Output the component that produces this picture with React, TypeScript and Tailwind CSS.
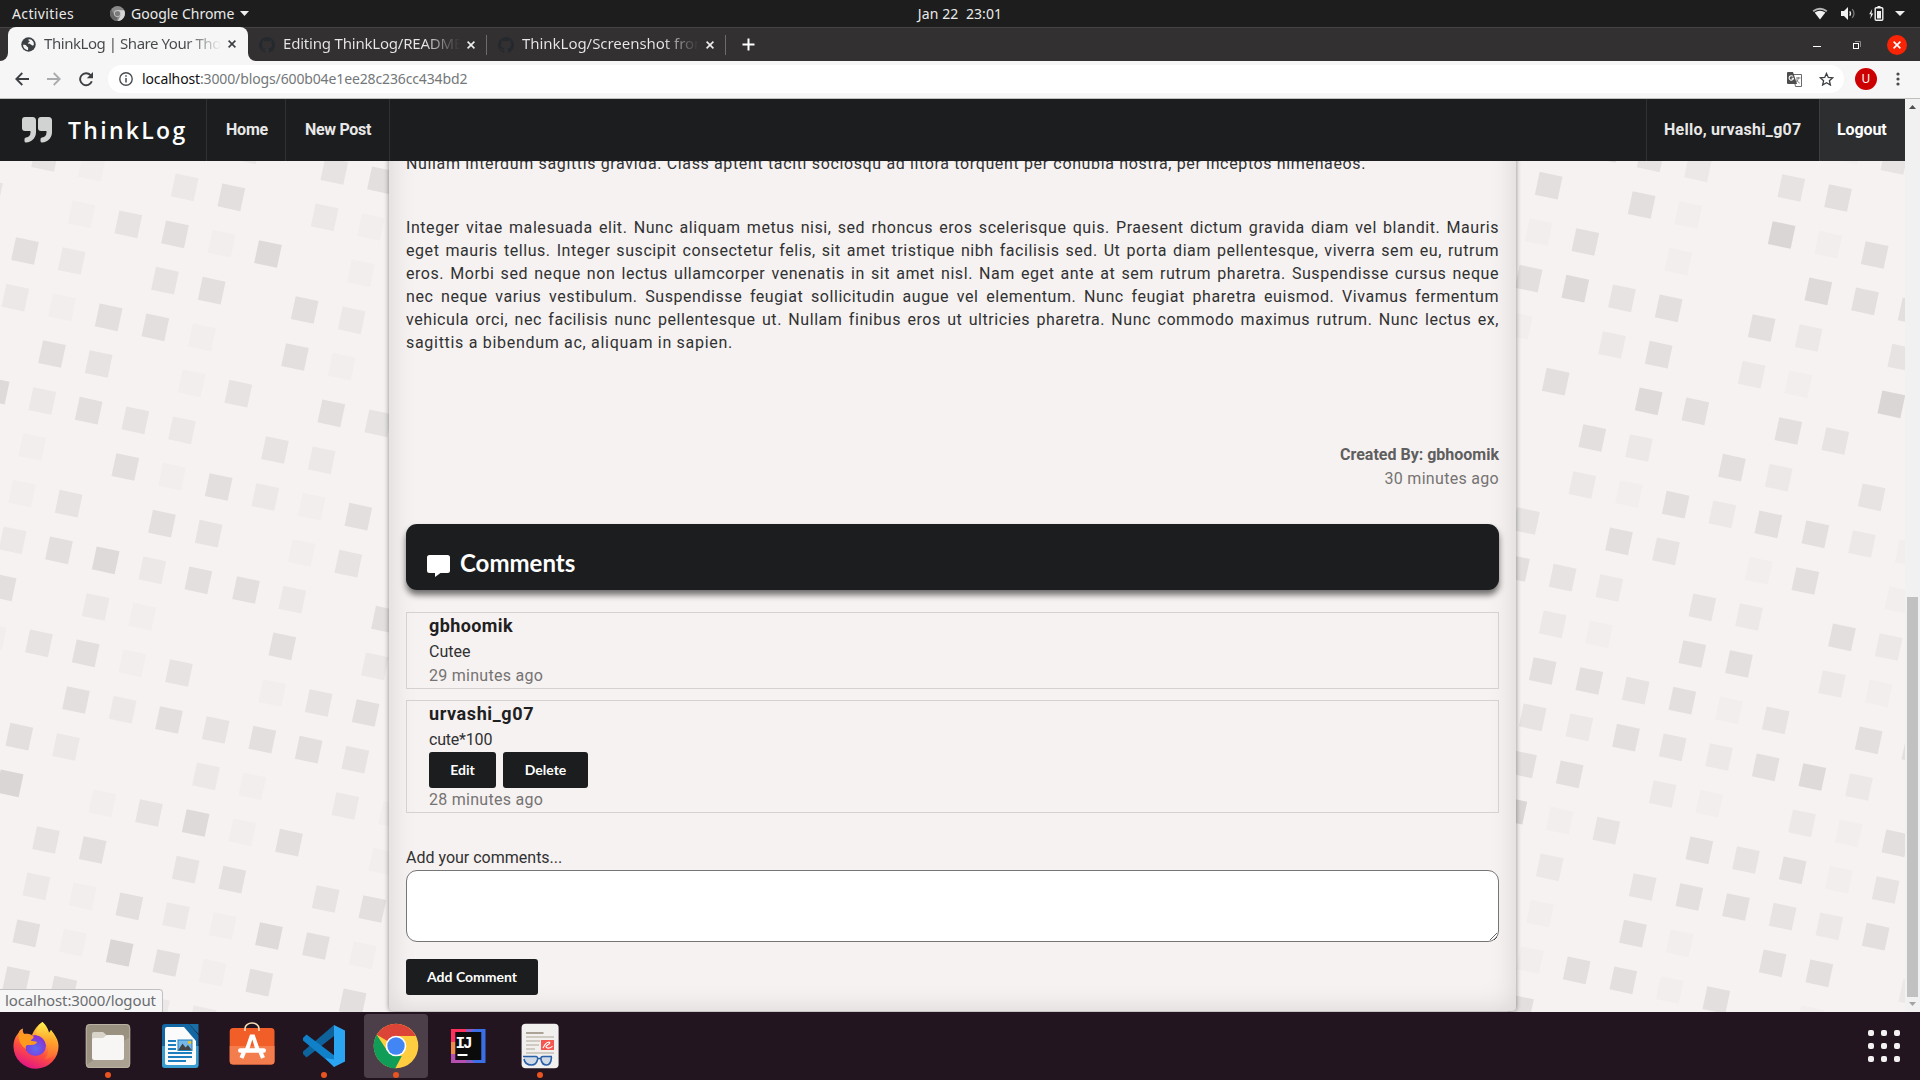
import type { ReactNode } from "react";

/* Tile centres (x, y, shade) of the confetti wallpaper, in thirds of a pixel. */
const LEFT_TOP: number[][] = [
  [135,-6,3],[275,23,1],[740,-29,2],[554,82,2],[694,112,4],[1003,33,3],[1143,61,4],[-33,97,3],[245,163,1],[385,193,3],[525,223,4],[665,251,1],[804,282,5],[974,172,2],[1113,201,1],[1083,340,1],[75,273,4],[215,303,2],[495,362,3],[635,392,4],[46,413,2],[186,442,1],[326,472,4],[466,502,4],[606,532,1],[914,450,4],[1055,481,2],[156,582,4],[296,612,3],[575,670,1],[715,701,3],[885,591,4],[1025,620,1],[-13,692,5],[127,723,2],[266,752,4],[406,781,3],[546,811,2],[994,760,4],[1135,790,3],[97,861,1],[825,870,3],[965,901,2],[376,921,4],[516,950,1],[656,981,4],[796,1011,2],[935,1040,1],[1075,1070,4],[66,1001,1],[206,1031,3],[486,1091,4],[626,1121,3],[38,1141,2],[177,1171,4],[317,1201,5],[457,1231,2],[905,1179,1],[1045,1211,3],[595,1261,4],[738,1290,4],[8,1282,4],[877,1319,2],
];
const LEFT_BOTTOM: number[][] = [
  [287,81,2],[427,110,1],[847,199,4],[1155,119,4],[1125,259,2],[-22,170,1],[117,190,3],[257,220,4],[397,250,1],[537,279,3],[817,339,1],[956,369,3],[1097,399,4],[228,360,4],[368,389,2],[507,420,4],[647,450,3],[787,479,4],[926,509,4],[1066,539,3],[58,470,4],[198,501,2],[618,589,2],[757,619,1],[1036,678,2],[1177,705,1],[29,610,6],[307,670,1],[447,699,3],[587,729,5],[727,757,1],[867,788,4],[1147,845,1],[138,780,3],[278,810,4],[557,869,3],[697,899,4],[977,957,3],[1117,987,4],[109,919,2],[248,949,1],[388,979,4],[528,1008,2],[668,1038,1],[807,1068,5],[948,1098,4],[1088,1126,1],[79,1060,4],[219,1088,1],[359,1119,6],[499,1149,4],[638,1178,1],[778,1208,4],[49,1200,4],[190,1229,4],[1058,1267,4],[468,1289,2],[608,1318,2],
];
const RIGHT_TOP: number[][] = [
  [146,77,4],[425,135,4],[565,165,1],[452,-5,3],[594,25,2],[320,-33,4],[116,216,1],[256,246,4],[535,305,1],[874,84,3],[1014,114,4],[845,225,6],[985,254,1],[1124,285,4],[1183,3,3],[1045,-28,1],[86,356,4],[226,386,5],[366,415,3],[506,445,4],[56,497,1],[336,555,2],[476,584,4],[955,394,5],[1095,424,4],[1235,454,4],[785,504,4],[926,534,2],[1204,593,3],[755,644,2],[895,673,1],[167,665,4],[446,724,5],[586,754,4],[1174,733,6],[277,834,4],[417,864,2],[865,813,4],[1006,843,3],[247,975,2],[387,1002,1],[527,1034,4],[667,1063,2],[696,923,4],[836,953,2],[1115,1012,3],[78,1083,3],[357,1144,4],[498,1174,3],[805,1093,4],[946,1123,4],[1086,1152,2],[1226,1180,1],[48,1224,4],[188,1253,3],[328,1284,2],[776,1232,1],[916,1263,4],
];
const RIGHT_BOTTOM: number[][] = [
  [158,133,2],[297,163,1],[607,82,3],[747,111,2],[1026,172,4],[1166,201,2],[1195,60,1],[128,273,4],[268,303,4],[407,332,3],[547,362,4],[687,391,1],[827,421,3],[577,222,4],[717,252,4],[996,312,2],[1136,340,1],[1106,481,4],[1246,511,4],[98,412,3],[238,442,2],[378,473,4],[518,502,3],[657,531,2],[797,562,4],[937,591,5],[1077,621,2],[69,553,4],[209,583,4],[488,642,2],[628,671,1],[906,730,2],[1046,760,1],[1186,790,4],[40,692,6],[179,722,1],[319,752,3],[598,811,4],[738,840,3],[878,871,4],[1017,899,1],[1157,930,3],[149,862,2],[428,921,3],[568,951,4],[708,981,4],[848,1010,3],[988,1039,2],[1127,1070,4],[120,1001,1],[399,1061,4],[539,1090,1],[818,1150,4],[958,1180,4],[1237,1238,2],[90,1140,1],[230,1171,4],[370,1201,4],[509,1230,1],[649,1260,4],[60,1285,4],[931,1318,1],
];
const SHADES = ["", "#f1eeed", "#ebe8e7", "#e6e3e2", "#e3dfde", "#dedad9", "#dad6d5"];

function Tiles({ data, dx, dy }: { data: number[][]; dx: number; dy: number }) {
  return (
    <g transform={`translate(${dx} ${dy}) scale(0.33333)`}>
      {data.map(([x, y, s], i) => (
        <rect key={i} x={-35} y={-35} width={70} height={70} fill={SHADES[s]} transform={`translate(${x} ${y}) rotate(12)`} />
      ))}
    </g>
  );
}

function Wallpaper() {
  return (
    <svg className="absolute inset-0" width="1905" height="851" viewBox="0 0 1905 851">
      <Tiles data={LEFT_TOP} dx={0} dy={-1} />
      <Tiles data={LEFT_BOTTOM} dx={0} dy={419} />
      <Tiles data={RIGHT_TOP} dx={1500} dy={-1} />
      <Tiles data={RIGHT_BOTTOM} dx={1500} dy={419} />
    </svg>
  );
}

function TopBar() {
  return (
    <header className="relative flex h-[27px] items-center bg-[#1d1d1d] pb-px text-[14px] text-[#eaeaea]">
      <span className="ml-3 w-[98px] tracking-[0.37px]">Activities</span>
      <svg width="15" height="15" viewBox="0 0 16 16">
        <circle cx="8" cy="8" r="8" fill="#8a8a8a" />
        <path d="M8 4.4h7.1A8 8 0 0 1 8.3 16l3-6z" fill="#d6d6d6" />
        <path d="M1.2 3.8 5 10l3 2-1 4A8 8 0 0 1 1.2 3.8z" fill="#666" />
        <circle cx="8" cy="8" r="3.7" fill="#c9c9c9" />
        <circle cx="8" cy="8" r="2.8" fill="#7b7b7b" />
      </svg>
      <span className="ml-1.5 w-[104px]">Google Chrome</span>
      <svg className="ml-[5px]" width="9" height="5" viewBox="0 0 9 5"><path d="M0 0h9L4.5 5z" fill="#eee" /></svg>
      <span className="absolute inset-x-0 text-center tracking-[0.1px] whitespace-pre">Jan 22  23:01</span>
      <div className="ml-auto flex items-center pr-[15px]">
        <svg width="16" height="13" viewBox="0 0 16 13">
          <path d="M.6 3.6Q8-2 15.4 3.6L14.300 5Q8 .6 1.700 5z" fill="#b5b5b5" />
          <path d="M2.600 5.600Q8 2 13.400 5.600L8 12.500z" fill="#f2f2f2" />
        </svg>
        <svg className="ml-[13px]" width="15" height="13" viewBox="0 0 15 13">
          <path d="M0 4h3l4-4v13L3 9H0z" fill="#f2f2f2" />
          <path d="M8.700 4.300q1.600 2.200 0 4.400" stroke="#e5e5e5" strokeWidth="1.400" fill="none" />
          <path d="M11.200 2.200q3.600 4.300 0 8.600" stroke="#777" strokeWidth="1.300" fill="none" />
        </svg>
        <svg className="ml-[13px]" width="15" height="15" viewBox="0 0 15 15">
          <path d="M3.200 3 .2 8.200h1.800L1.200 13l3-5.500H2.400z" fill="#f2f2f2" />
          <path d="M8.500 0h3v1.500h-3z" fill="#f2f2f2" />
          <rect x="6.200" y="1.700" width="7.600" height="12.600" rx="1" fill="none" stroke="#f2f2f2" strokeWidth="1.400" />
          <rect x="8" y="5" width="4" height="7.500" fill="#f2f2f2" />
        </svg>
        <svg className="ml-[11px]" width="10" height="5" viewBox="0 0 10 5"><path d="M0 0h10L5 5z" fill="#eee" /></svg>
      </div>
    </header>
  );
}

function Cross({ color, size = 8 }: { color: string; size?: number }) {
  return (
    <svg width={size} height={size} viewBox="0 0 8 8"><path d="m.6.6 6.800 6.800M7.400.6.6 7.400" stroke={color} strokeWidth="1.600" /></svg>
  );
}

function Octocat() {
  return (
    <svg className="shrink-0" width="16" height="16" viewBox="0 0 16 16" fill="#24292e">
      <path d="M8 0a8 8 0 0 0-2.530 15.590c.4.070.55-.17.55-.38v-1.490c-2.010.37-2.530-.49-2.690-.94-.09-.23-.48-.94-.82-1.130-.28-.15-.68-.52-.01-.53.63-.01 1.080.58 1.230.82.72 1.210 1.870.87 2.330.66.07-.52.28-.87.51-1.070-1.780-.2-3.640-.89-3.640-3.950 0-.87.31-1.590.82-2.150-.08-.2-.36-1.020.08-2.120 0 0 .67-.21 2.200.82a7.600 7.600 0 0 1 4 0c1.530-1.040 2.200-.82 2.200-.82.44 1.100.16 1.920.08 2.120.51.56.82 1.270.82 2.150 0 3.070-1.870 3.750-3.650 3.950.29.25.54.73.54 1.480v2.200c0 .21.15.46.55.38A8 8 0 0 0 8 0z" />
    </svg>
  );
}

function DarkTab({ title, track }: { title: string; track: string }) {
  return (
    <div className="flex h-full w-[239px] items-center pl-[11px]">
      <Octocat />
      <span className={`mb-[3px] ml-2 w-[177px] overflow-hidden bg-linear-to-r from-[#e8e8e8] from-80% to-[#333031] bg-clip-text text-[15px] whitespace-nowrap text-transparent ${track}`}>{title}</span>
      <span className="ml-[7px] flex"><Cross color="#eee" /></span>
      <span className="ml-auto h-5 w-px bg-[#6d6b6c]" />
    </div>
  );
}

function TabStrip() {
  return (
    <div className="flex h-[34px] border-t border-[#454344] bg-[#333031]">
      <div className="relative -mt-px ml-2 flex h-[34px] w-[240px] items-center rounded-t-lg bg-[#f6f6f6] pl-[13px]">
        <svg className="absolute bottom-0 -left-2" width="8" height="8" viewBox="0 0 8 8"><path d="M8 0v8H0a8 8 0 0 0 8-8z" fill="#f6f6f6" /></svg>
        <svg className="absolute -right-2 bottom-0" width="8" height="8" viewBox="0 0 8 8"><path d="M0 0v8h8a8 8 0 0 1-8-8z" fill="#f6f6f6" /></svg>
        <svg width="15" height="15" viewBox="0 0 15 15">
          <circle cx="7.500" cy="7.500" r="7.200" fill="#3c4043" />
          <path d="M2 7.800c1.500-.3 3 .2 3.600 1.200.3 1 1.500.8 1.600 1.800.1.800-.3 1.500-.2 2.400A5.800 5.800 0 0 1 2 7.800zM7.700 2.200c-.6.900-.2 1.500.5 1.500.9 0 .6 1-.2 1.300-.9.300-.4 1.300-1.200 1.500.5.900 1.800.2 2.800.8.900.6 1.500 1.500 2.500 1.200.5-.1.700-.6.800-1A5.600 5.600 0 0 0 10.500 2.700 5 5 0 0 0 7.700 2.200z" fill="#f6f6f6" />
        </svg>
        <span className="mb-[2px] ml-2 w-[177px] overflow-hidden bg-linear-to-r from-[#45484b] from-80% to-[#f6f6f6] bg-clip-text text-[15px] tracking-[-0.45px] whitespace-nowrap text-transparent">ThinkLog | Share Your Tho</span>
        <span className="ml-[7px] flex"><Cross color="#3c4043" /></span>
      </div>
      <DarkTab title="Editing ThinkLog/README" track="tracking-[-0.2px]" />
      <DarkTab title="ThinkLog/Screenshot from" track="tracking-[-0.04px]" />
      <span className="ml-[16px] flex items-center">
        <svg width="13" height="13" viewBox="0 0 13 13"><path d="M6.500.5v12M.5 6.500h12" stroke="#fff" strokeWidth="2" /></svg>
      </span>
      <div className="ml-auto flex items-center pr-[13px]">
        <span className="mt-1 h-px w-2 bg-white" />
        <svg className="ml-8" width="8" height="8" viewBox="0 0 8 8">
          <path d="M2 .5h5.500V6" stroke="#8a8889" fill="none" />
          <rect x=".5" y="2.500" width="5" height="5" stroke="#fff" fill="none" />
        </svg>
        <span className="ml-[26px] flex size-5 items-center justify-center rounded-full bg-[#f92405]"><Cross color="#fff" /></span>
      </div>
    </div>
  );
}

function Toolbar() {
  return (
    <div className="flex h-[38px] items-center border-b border-[#bcc1bc] bg-[#f6f6f6] pb-px pr-[20px] pl-[15px]">
      <svg width="14" height="14" viewBox="0 0 14 14"><path d="M14 7H1.500M7.300 1 1.300 7l6 6" stroke="#3c4043" strokeWidth="1.800" fill="none" /></svg>
      <svg className="ml-[18px]" width="14" height="14" viewBox="0 0 14 14"><path d="M0 7h12.500M6.700 1l6 6-6 6" stroke="#a9abac" strokeWidth="1.800" fill="none" /></svg>
      <svg className="ml-[18px]" width="15" height="15" viewBox="0 0 15 15"><path d="M12.800 9.200a6 6 0 1 1-1.200-6" stroke="#3c4043" strokeWidth="1.900" fill="none" /><path d="M14 0v6.200H7.800z" fill="#3c4043" /></svg>
      <div className="ml-[14px] flex h-7 flex-1 items-center rounded-full bg-white pr-[10px] pl-[11px]">
        <svg width="14" height="14" viewBox="0 0 14 14"><circle cx="7" cy="7" r="6.200" stroke="#4a4d50" strokeWidth="1.400" fill="none" /><path d="M7 6v4.500M7 3.300v1.500" stroke="#4a4d50" strokeWidth="1.500" /></svg>
        <span className="mb-px ml-[9px] text-[14px] tracking-[-0.13px] text-[#747779]"><span className="text-[#111]">localhost</span>:3000/blogs/600b04e1ee28c236cc434bd2</span>
        <svg className="ml-auto" width="15" height="15" viewBox="0 0 15 15">
          <path d="M6 2.500h8.500v12H8.500z" fill="#fff" stroke="#6a6a6a" />
          <path d="M9 6h4.500M11.200 5v1c0 2-1.200 3.800-2.500 4.500M9.500 7.500c.5 1.500 1.800 3 3.200 3.600" stroke="#777" fill="none" />
          <path d="M0 1a1 1 0 0 1 1-1h5l4 12H1a1 1 0 0 1-1-1z" fill="#4d4d4d" />
          <path d="M6 4.500A2.200 2.200 0 1 0 6.500 6.200H4.600" stroke="#fff" strokeWidth="1.100" fill="none" />
        </svg>
        <svg className="ml-[17px]" width="15" height="14" viewBox="0 0 15 14"><path d="m7.500 1.400 1.800 4 4.400.4-3.300 2.900 1 4.300-3.900-2.300L3.600 13l1-4.300L1.300 5.800l4.400-.4z" stroke="#3c4043" strokeWidth="1.300" fill="none" /></svg>
      </div>
      <span className="ml-[11px] flex size-[22px] items-center justify-center rounded-full bg-[#cc0000] text-[12px] text-white">U</span>
      <svg className="ml-[19px]" width="4" height="14" viewBox="0 0 4 14" fill="#4a4a4a"><circle cx="2" cy="2" r="1.600" /><circle cx="2" cy="7" r="1.600" /><circle cx="2" cy="12" r="1.600" /></svg>
    </div>
  );
}

function SiteNav() {
  return (
    <nav className="flex h-[62px] items-center bg-[#1b1d1e] font-['Roboto',sans-serif] text-[16px] font-bold text-[#e8e8e8]">
      <div className="flex h-full w-[207px] items-center border-r border-[#2f3132] pl-[22px]">
        <svg width="30" height="26" viewBox="0 0 30 26" fill="#d1d3d3">
          <path d="M3 0h7.500A3.500 3.500 0 0 1 14 3.500V15c0 6-4 10-10 10.500a1.500 1.500 0 0 1-1.500-1.500v-2A1.600 1.600 0 0 1 4 20.500c2.800-.3 4.500-2 4.500-5V14H3a3 3 0 0 1-3-3V3a3 3 0 0 1 3-3z" />
          <path d="M19 0h7.500A3.500 3.500 0 0 1 30 3.500V15c0 6-4 10-10 10.500a1.500 1.500 0 0 1-1.500-1.500v-2a1.600 1.600 0 0 1 1.500-1.500c2.800-.3 4.500-2 4.500-5V14H19a3 3 0 0 1-3-3V3a3 3 0 0 1 3-3z" />
        </svg>
        <span className="ml-[16px] font-['Open_Sans',sans-serif] text-[23px] font-semibold tracking-[2.3px] text-white">ThinkLog</span>
      </div>
      <span className="flex h-full w-[79px] items-center border-r border-[#2f3132] pl-[19px] tracking-[-0.2px]">Home</span>
      <span className="flex h-full w-[104px] items-center border-r border-[#2f3132] pl-[19px] tracking-[-0.3px]">New Post</span>
      <span className="ml-auto flex h-full w-[173px] items-center border-l border-[#2f3132] pl-[17px] tracking-[0.25px]">Hello, urvashi_g07</span>
      <span className="flex h-full w-[86px] items-center border-l border-[#3d3f40] bg-[#2c2e2f] pl-[17px] tracking-[-0.1px] text-white">Logout</span>
    </nav>
  );
}

const LINES = [
  "Integer vitae malesuada elit. Nunc aliquam metus nisi, sed rhoncus eros scelerisque quis. Praesent dictum gravida diam vel blandit. Mauris",
  "eget mauris tellus. Integer suscipit consectetur felis, sit amet tristique nibh facilisis sed. Ut porta diam pellentesque, viverra sem eu, rutrum",
  "eros. Morbi sed neque non lectus ullamcorper venenatis in sit amet nisl. Nam eget ante at sem rutrum pharetra. Suspendisse cursus neque",
  "nec neque varius vestibulum. Suspendisse feugiat sollicitudin augue vel elementum. Nunc feugiat pharetra euismod. Vivamus fermentum",
  "vehicula orci, nec facilisis nunc pellentesque ut. Nullam finibus eros ut ultricies pharetra. Nunc commodo maximus rutrum. Nunc lectus ex,",
];

function DarkButton({ children, width }: { children: ReactNode; width: string }) {
  return (
    <button className={`flex h-9 items-center justify-center rounded-[3px] bg-[#1b1d1e] pb-0.5 font-['Lato',sans-serif] text-[14px] font-bold text-white ${width}`}>{children}</button>
  );
}

function Article() {
  return (
    <main className="relative -mt-10 ml-[389px] flex h-[890px] w-[1127px] flex-col rounded-[4px] bg-[#f6f2f1] px-[17px] pt-[31px] font-['Roboto',sans-serif] text-[16px] text-[#303132] shadow-[0_0_5px_rgba(0,0,0,0.45),inset_0_0_28px_rgba(0,0,0,0.13)]">
      <p className="leading-[23px] tracking-[0.64px] whitespace-nowrap">Nullam interdum sagittis gravida. Class aptent taciti sociosqu ad litora torquent per conubia nostra, per inceptos himenaeos.</p>
      <div className="mt-[41px] leading-[23px] tracking-[0.56px]">
        {LINES.map((line) => (
          <p key={line} className="h-[23px] [text-align-last:justify] whitespace-nowrap">{line}</p>
        ))}
        <p className="h-[23px] tracking-[0.7px]">sagittis a bibendum ac, aliquam in sapien.</p>
      </div>
      <div className="mt-[89px] text-right leading-6 text-[#757373]">
        <p className="font-bold text-[#5f5e5e]">Created By: gbhoomik</p>
        <p className="tracking-[0.3px]">30 minutes ago</p>
      </div>
      <div className="mt-[33px] flex h-[66px] items-center rounded-[11px] bg-[#1b1d1e] pt-3 pl-[21px] text-white shadow-[0_5px_6px_rgba(0,0,0,0.55)]">
        <svg className="mt-[6px]" width="23" height="22" viewBox="0 0 23 22"><path d="M2.500 0h18A2.500 2.500 0 0 1 23 2.500v13A2.500 2.500 0 0 1 20.500 18h-7L8 22v-4H2.500A2.500 2.500 0 0 1 0 15.500v-13A2.500 2.500 0 0 1 2.500 0z" fill="#fff" /></svg>
        <h2 className="ml-[10px] font-['Lato',sans-serif] text-[24px] font-bold">Comments</h2>
      </div>
      <section className="mt-[22px] h-[77px] border border-[#d3d2d1] pl-[22px] leading-[25px]">
        <h3 className="h-[26px] text-[18px] font-bold tracking-[0.4px] text-[#1f2021]">gbhoomik</h3>
        <p className="h-6">Cutee</p>
        <p className="tracking-[0.27px] text-[#757373]">29 minutes ago</p>
      </section>
      <section className="mt-[11px] h-[113px] border border-[#d3d2d1] pl-[22px] leading-[25px]">
        <h3 className="h-[26px] text-[18px] font-bold tracking-[0.6px] text-[#1f2021]">urvashi_g07</h3>
        <p className="h-6 tracking-[-0.2px]">cute*100</p>
        <div className="mt-px flex gap-[7px]">
          <DarkButton width="w-[67px]">Edit</DarkButton>
          <DarkButton width="w-[85px]">Delete</DarkButton>
        </div>
        <p className="leading-6 tracking-[0.27px] text-[#757373]">28 minutes ago</p>
      </section>
      <label className="mt-[32px] leading-[25px]">Add your comments...</label>
      <textarea className="h-[72px] shrink-0 resize rounded-[11px] border border-[#767676] bg-white" />
      <div className="mt-[17px]"><DarkButton width="w-[132px]">Add Comment</DarkButton></div>
    </main>
  );
}

function Scrollbar() {
  return (
    <div className="flex w-[15px] flex-col items-center bg-[#f1f1f1]">
      <svg className="mt-[6px]" width="7" height="4" viewBox="0 0 7 4"><path d="M3.500 0 7 4H0z" fill="#505050" /></svg>
      <div className="mt-[488px] h-[400px] w-[11px] bg-[#c1c1c1]" />
      <svg className="mt-[5px]" width="7" height="4" viewBox="0 0 7 4"><path d="M0 0h7L3.500 4z" fill="#a3a3a3" /></svg>
    </div>
  );
}

function DockItem({ children, active, running }: { children: ReactNode; active?: boolean; running?: boolean }) {
  return (
    <div className="flex w-[72px] items-center justify-center">
      <div className={`relative flex size-16 items-center justify-center rounded-[4px] ${active ? "bg-[#4d3f49]" : ""}`}>
        <svg width="48" height="48" viewBox="0 0 48 48">{children}</svg>
        {running && <span className="absolute bottom-0 left-[29px] size-[6px] rounded-full bg-[#e95420]" />}
      </div>
    </div>
  );
}

function Dock() {
  return (
    <footer className="flex h-[68px] bg-[#22151f]">
      <DockItem>
        <defs>
          <linearGradient id="fox" x1="0.8" y1="0" x2="0.35" y2="1">
            <stop offset="0" stopColor="#fff44f" /><stop offset=".35" stopColor="#ffa436" /><stop offset=".65" stopColor="#ff4f3e" /><stop offset="1" stopColor="#e31587" />
          </linearGradient>
          <radialGradient id="globe" cx=".5" cy=".65" r=".6"><stop offset="0" stopColor="#5b6df2" /><stop offset="1" stopColor="#8a2fd0" /></radialGradient>
          <linearGradient id="tail" x1="0" y1="0" x2="0" y2="1"><stop offset="0" stopColor="#fff44f" /><stop offset=".5" stopColor="#ffa52a" /><stop offset="1" stopColor="#ff6a35" /></linearGradient>
        </defs>
        <path d="M30.500 0c4 4 5.500 7 6.500 11l2-3c4 5 7.500 10 7.500 16a22.500 22.200 0 0 1-45 1C1.500 19 3 15 6.500 11c.5-2 2-4 4.500-4.500-.5 2 0 4 1 5.500 3-.5 5 0 8 1C22 8 25.500 3 30.500 0z" fill="url(#fox)" />
        <circle cx="23.500" cy="23.500" r="10.500" fill="url(#globe)" />
        <path d="M30.500 0c4 4 5.500 7 6.500 11l2-3c4 5 6.500 10 6.500 16-1 8-6 13-13 13 4-4 5-9 2-14-2-5-5-9-10-9.500C24 9 26 3 30.500 0z" fill="url(#tail)" opacity=".85" />
        <path d="M6.500 11C10 11 13 11.500 16 14c3-1 5 0 6 1-1 2-3 2-3 4 2 0 4 0 6 1-1 3-5 3-9 3-2 0-3 2-2 4-5-3-8-9-7.500-16z" fill="#ff9a1f" />
      </DockItem>
      <DockItem running>
        <rect x="1.800" y="2" width="44.400" height="44" rx="4" fill="#9b9180" />
        <path d="M46 15v27a4 4 0 0 1-4 4H6a4 4 0 0 1-4-3z" fill="#aaa192" />
        <rect x="2.300" y="2.500" width="43.400" height="43" rx="3.500" fill="none" stroke="#b9b1a3" />
        <path d="M8 12a2 2 0 0 1 2-2h9l4 3.500V20H8z" fill="#d9d4ca" />
        <path d="M8 18a2 2 0 0 1 2-2h9l4-3h15a2 2 0 0 1 2 2v21a2 2 0 0 1-2 2H10a2 2 0 0 1-2-2z" fill="#f7f6f4" />
      </DockItem>
      <DockItem>
        <path d="M9 2h24l9.500 11V43a3 3 0 0 1-3 3H9a3 3 0 0 1-3-3V5a3 3 0 0 1 3-3z" fill="#1368a3" />
        <path d="M6 24h36.500v19a3 3 0 0 1-3 3H9a3 3 0 0 1-3-3z" fill="#3a9dd0" />
        <path d="M33 2h9.500v10z" fill="#1a6ea8" />
        <path d="M11 5h17l12 14v22a2 2 0 0 1-2 2H11a2 2 0 0 1-2-2V7a2 2 0 0 1 2-2z" fill="#fbfbfb" />
        <path d="M12 19h8M12 23h8M12 27h8M12 31h24M12 35h24M12 39h18" stroke="#1d7fbe" strokeWidth="2" />
        <rect x="22" y="18" width="14" height="10.500" fill="#75b8ea" />
        <path d="m22 28.500 4.500-7 3 4 2.500-2.500 4 5.500z" fill="#444" /><circle cx="33.800" cy="20.200" r="1.800" fill="#f9c21b" />
        <rect x="22" y="18" width="14" height="10.500" fill="none" stroke="#1d7fbe" />
      </DockItem>
      <DockItem>
        <path d="M1.700 9.500A3.500 3.500 0 0 1 5.200 6h38a3.500 3.500 0 0 1 3.300 3.500v29.500a3.500 3.500 0 0 1-3.500 3.500H5.200A3.500 3.500 0 0 1 1.700 39z" fill="#f15e27" />
        <path d="M1.700 24h44.800v15a3.500 3.500 0 0 1-3.500 3.500H5.200A3.500 3.500 0 0 1 1.700 39z" fill="#f47d4e" />
        <path d="M17 9V6.500a7 5.500 0 0 1 14 0V9" fill="none" stroke="#f6deb8" strokeWidth="1.600" />
        <path d="m13.500 36 2.500-6M35 36l-2.500-6" stroke="#fff" strokeWidth="4.200" fill="none" />
        <path d="m17 27 5-14.500h4.600l5 14.500h-4.400l-2.900-9.500-2.900 9.500z" fill="#fff" />
        <rect x="10" y="26.200" width="28" height="4.600" rx="2.300" fill="#fff" />
      </DockItem>
      <DockItem running>
        <path d="m3 32 3.500 3.500L34 14V3L3 29.500z" fill="#0e639c" />
        <path d="m3 16 3.500-3.500L35 34v11L3 18.500z" fill="#1080c8" />
        <path d="M34 3 45 8.500v31L34 45l-9-9 9 1.500V12z" fill="#2ba4f2" />
      </DockItem>
      <DockItem active running>
        <circle cx="24" cy="24" r="22.300" fill="#ffcd40" />
        <path d="M24 24 4.700 12.800A22.300 22.300 0 0 1 43.800 14H24z" fill="#db4437" />
        <path d="M4.700 12.800 15.300 29 24 34h5.800l-6.500 12.300A22.300 22.300 0 0 1 4.700 12.800z" fill="#0f9d58" />
        <circle cx="24" cy="24" r="10.300" fill="#fff" /><circle cx="24" cy="24" r="8.700" fill="#4285f4" />
      </DockItem>
      <DockItem>
        <path d="M7 7h17v17H7z" fill="#fe315d" /><path d="M7 22h17v19H7z" fill="#b74fb0" /><path d="M7 20h6v12H7z" fill="#f08a4b" />
        <path d="M22 7h19.500v34H22z" fill="#3a6fe8" /><path d="M22 7h9l-9 6zM22 41h9l-6-5h-3z" fill="#8a5cc0" />
        <rect x="11.300" y="10" width="26" height="28" fill="#0b0b0b" />
        <text x="11.500" y="26" fill="#fff" fontFamily="Liberation Mono, monospace" fontWeight="700" fontSize="16" textLength="17">IJ</text>
        <path d="M13.500 33h10" stroke="#fff" strokeWidth="2" />
      </DockItem>
      <DockItem running>
        <rect x="5.600" y="1.700" width="37" height="44.500" rx="4" fill="#f1f0ef" />
        <path d="M10 11h17.500" stroke="#aca397" strokeWidth="2" />
        <path d="M10 15h28M10 19h14M10 23h13M10 27h9M10 31h28" stroke="#c3bdb4" strokeWidth="1.700" />
        <rect x="25" y="18" width="13" height="10" fill="#f4574f" />
        <path d="M27 26q3-6 6-6 2 1-1.500 3-3 2 0 3 3 .5 5-2" stroke="#fff" strokeWidth="1.200" fill="none" />
        <path d="M8 34.500h12v5q-1 4-5 4-6 0-7-5zM25 34.500h11v5q-1 4-5 4-5 0-6-5z" fill="#b9cbe0" opacity=".6" />
        <path d="M7 34.500h13q1.800 0 1.500 3-1 5.500-6 5.500-6.500 0-7.500-6M36 34.500h-9q-2.500 0-2 3 1 5.500 5.500 5.500 4.500 0 5-8M21.500 36.500h3.500" stroke="#2b5fa8" strokeWidth="1.600" fill="none" />
      </DockItem>
      <div className="mr-[20px] ml-auto grid grid-cols-3 content-center gap-[7px]">
        {Array.from({ length: 9 }, (_, i) => <span key={i} className="size-[6px] rounded-[2px] bg-[#f3f1f2]" />)}
      </div>
    </footer>
  );
}

export default function App() {
  return (
    <div className="flex h-[1080px] w-[1920px] flex-col overflow-hidden bg-[#f6f2f1] font-['Noto_Sans',sans-serif]">
      <TopBar />
      <TabStrip />
      <Toolbar />
      <div className="relative flex h-[913px]">
        <div className="w-[1905px]">
          <div className="relative z-10"><SiteNav /></div>
          <div className="relative flow-root h-[851px] overflow-hidden">
            <Wallpaper />
            <Article />
          </div>
        </div>
        <Scrollbar />
        <div className="absolute bottom-0 left-0 z-20 flex h-[23px] w-[163px] items-center rounded-tr-[4px] border-t border-r border-[#c3c1c0] bg-[#f6f6f6] pb-0.5 pl-[5px] text-[15px] tracking-[-0.11px] text-[#6b6d70]">localhost:3000/logout</div>
      </div>
      <Dock />
    </div>
  );
}
